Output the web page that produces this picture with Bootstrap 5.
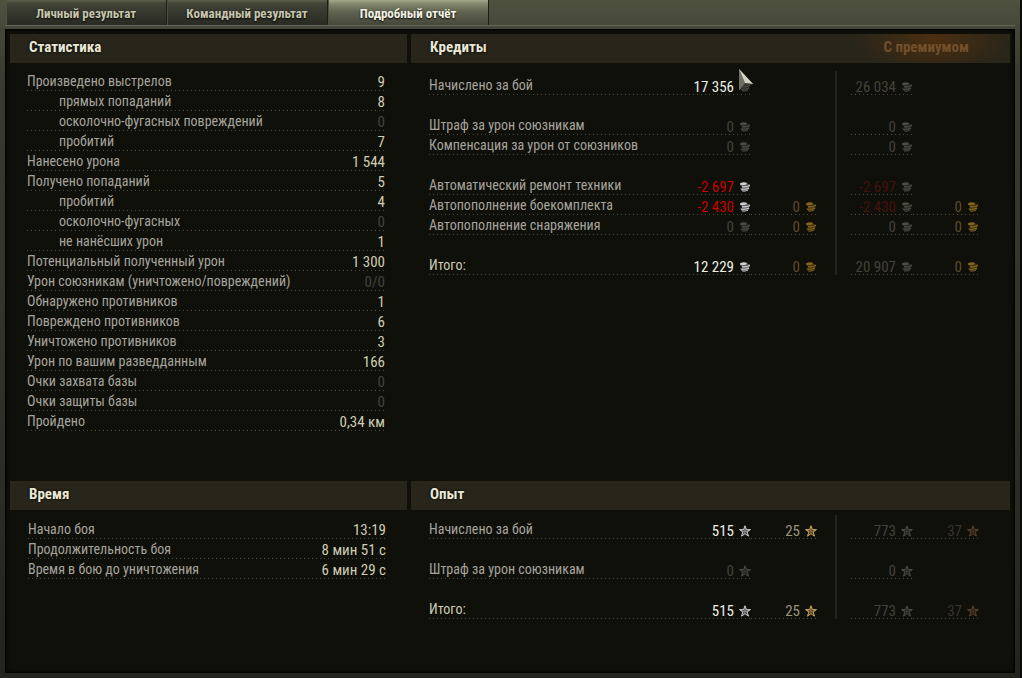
<!DOCTYPE html>
<html lang="ru" data-bs-theme="dark">
<head>
<meta charset="utf-8">
<meta name="viewport" content="width=device-width, initial-scale=1">
<title>Подробный отчёт</title>
<link rel="stylesheet" href="https://cdn.jsdelivr.net/npm/bootstrap@5.3.0/dist/css/bootstrap.min.css">
<script src="https://cdn.jsdelivr.net/npm/bootstrap@5.3.0/dist/js/bootstrap.bundle.min.js"></script>
<style>
  body { font-family: "Roboto Condensed", "Liberation Sans Narrow", "Liberation Sans", sans-serif; font-size: 14px; line-height: 20px; color: #a5a39b; background: #0b0b09; }
  .frame { min-height: 100vh; padding: 0 5px 5px; border-right: 2px solid #0b0b09;
    background: linear-gradient(#50523f 0, #45473a 28px, #3a3b30 80px, #33352a 300px, #23241d 100%); }
  .frame-bar { height: 26px; border-bottom: 1px solid #66675a; padding-left: 1px; gap: 1px; }
  .tab-btn { width: 160px; height: 25px; border: 0; padding: 3px 0 0; font-weight: 700; font-size: 13px; line-height: 20px; color: #c6c5ae;
    text-shadow: 0 1px 2px #000; background: linear-gradient(#5f614d 0, #45473a 3px, #3a3b31 9px, #292a22 100%); box-shadow: 1px 0 #1d1e18, inset 1px 0 #4d4f40; }
  .tab-btn.active { color: #f2f2e4; background: linear-gradient(#a3a78a 0, #82866c 4px, #636652 11px, #45473a 100%); }
  .panel { margin: 3px 0 0; padding: 4px; border: 1px solid #030302; background: #10100b; box-shadow: inset 0 0 4px #000; }
  .panes { display: grid; grid-template-columns: 397fr 599fr; column-gap: 4px; grid-template-rows: auto 1fr; row-gap: 50px; }
  .pane-head { height: 29px; padding: 0 41px 0 19px; background: #28251a; }
  .pane-head h2 { font-size: 15px; line-height: 27px; font-weight: 700; color: #e9e8d6; text-shadow: 0 0 3px #000; margin: 0; }
  .pane-head.premium { background: radial-gradient(ellipse 80px 34px at calc(100% - 76px) 6px, #4b2e10, #28251a00), #28251a; }
  .pane-head .premium-label { font-size: 15px; font-weight: 700; line-height: 27px; color: #73502a; }
  .stats { width: calc(100% - 39px); margin: 8px 22px 0 17px; }
  .time-list { width: calc(100% - 39px); margin: 9px 21px 0 18px; }
  table { border-collapse: separate; border-spacing: 0; }
  th { font-weight: 400; }
  td, th { height: 20px; padding: 0; white-space: nowrap; }
  .dots { background: repeating-linear-gradient(90deg, #4a4a40 0 1px, transparent 1px 4px) left bottom / 100% 1px no-repeat; }
  .stats tr { background: repeating-linear-gradient(90deg, #4a4a40 0 1px, transparent 1px 4px) left bottom / 100% 1px no-repeat; }
  .stats td { font-size: 15px; color: #cdccb4; text-align: right; padding-top: 2px; line-height: 18px; }
  .stats .sub { padding-left: 32px; }
  td.nil, .stats td.nil { color: #43423a; }
  .pay { width: calc(100% - 49px); margin: 8px 31px 0 18px; padding-top: 4px; table-layout: fixed;
    background: linear-gradient(#23221c, #23221c) calc(100% - 142px) 0 / 2px 100% no-repeat; }
  .pay td { font-size: 15px; padding-top: 5px; line-height: 15px; text-align: right; }
  .pay td.mid { padding: 0; }
  .pay svg { width: 12px; height: 12px; margin-left: 5px; vertical-align: -1px; }
  .xp { margin-top: 5px; }
  .total { color: #cdccb4; }
  .on { color: #eeeee4; } .neg { color: #c60000; } .dim { color: #43423a; } .negdim { color: #45100b; }
  .gold0 { color: #5d4b2b; } .free { color: #98957c; } .freedim { color: #37342a; }
  .i-on { color: #cfcfd2; } .i-dim { color: #4b4b48; } .i-gold { color: #86651c; } .i-free { color: #d0a65a; } .i-fdim { color: #594526; }
  .pointer { position: absolute; left: 739px; top: 69px; width: 15px; height: 23px; pointer-events: none; }
</style>
</head>
<body>
<svg class="d-none">
  <symbol id="coins" viewBox="0 0 12 12">
    <path d="M1 2.500Q4 .3 8 1.600L8.500 3 11 3.600V5.300L9.800 6 10.500 7.800 9 9.300Q6 11 2.500 9.800L1.500 8.300 3 7 2.500 5 1 4Z" fill="currentColor" opacity=".45"/>
    <path d="M1 2.400Q4.500.6 8 2.200L7 3.600Q3.500 4.600 1 3.600ZM3 5Q7 6 11 3.800V5Q7.500 7 3 6.200ZM1.500 7.300Q5 8.600 10 6.600V7.800Q6 9.500 2 8.500ZM3 9.400Q6 10.200 9 9V9.800Q6 11 3 10.300Z" fill="currentColor"/>
  </symbol>
  <symbol id="star" viewBox="0.500 0.500 11 11">
    <path d="M6 1.200L7.300 4.700H11L8 7 9.200 10.700 6 8.500 2.800 10.700 4 7 1 4.700H4.700Z" fill="currentColor" fill-opacity=".3" stroke="currentColor" stroke-width=".9"/>
    <path d="M6 2v5M6 7l4-2M6 7L2 5" stroke="currentColor" stroke-width=".5" fill="none"/>
  </symbol>
</svg>
<div class="frame d-flex flex-column">
  <div class="frame-bar d-flex" role="tablist">
    <button class="tab-btn" type="button" role="tab">Личный результат</button>
    <button class="tab-btn" type="button" role="tab">Командный результат</button>
    <button class="tab-btn active" type="button" role="tab" aria-selected="true">Подробный отчёт</button>
  </div>
  <main class="panel flex-grow-1 d-flex">
    <div class="panes flex-grow-1">
      <section>
        <header class="pane-head"><h2>Статистика</h2></header>
        <table class="stats">
          <tr><th>Произведено выстрелов</th><td>9</td></tr>
          <tr><th class="sub">прямых попаданий</th><td>8</td></tr>
          <tr><th class="sub">осколочно-фугасных повреждений</th><td class="nil">0</td></tr>
          <tr><th class="sub">пробитий</th><td>7</td></tr>
          <tr><th>Нанесено урона</th><td>1 544</td></tr>
          <tr><th>Получено попаданий</th><td>5</td></tr>
          <tr><th class="sub">пробитий</th><td>4</td></tr>
          <tr><th class="sub">осколочно-фугасных</th><td class="nil">0</td></tr>
          <tr><th class="sub">не нанёсших урон</th><td>1</td></tr>
          <tr><th>Потенциальный полученный урон</th><td>1 300</td></tr>
          <tr><th>Урон союзникам (уничтожено/повреждений)</th><td class="nil">0/0</td></tr>
          <tr><th>Обнаружено противников</th><td>1</td></tr>
          <tr><th>Повреждено противников</th><td>6</td></tr>
          <tr><th>Уничтожено противников</th><td>3</td></tr>
          <tr><th>Урон по вашим разведданным</th><td>166</td></tr>
          <tr><th>Очки захвата базы</th><td class="nil">0</td></tr>
          <tr><th>Очки защиты базы</th><td class="nil">0</td></tr>
          <tr><th>Пройдено</th><td>0,34 км</td></tr>
        </table>
      </section>
      <section>
        <header class="pane-head premium d-flex justify-content-between"><h2>Кредиты</h2><span class="premium-label">С премиумом</span></header>
        <table class="pay">
          <colgroup><col><col width="62"><col width="66"><col width="34"><col width="62"><col width="66"></colgroup>
          <tr><th class="dots">Начислено за бой</th><td class="dots on">17 356<svg class="i-dim"><use href="#coins"/></svg></td><td></td><td class="mid"></td><td class="dots dim">26 034<svg class="i-dim"><use href="#coins"/></svg></td><td></td></tr>
          <tr><td colspan="6"></td></tr>
          <tr><th class="dots">Штраф за урон союзникам</th><td class="dots dim">0<svg class="i-dim"><use href="#coins"/></svg></td><td></td><td class="mid"></td><td class="dots dim">0<svg class="i-dim"><use href="#coins"/></svg></td><td></td></tr>
          <tr><th class="dots">Компенсация за урон от союзников</th><td class="dots dim">0<svg class="i-dim"><use href="#coins"/></svg></td><td></td><td class="mid"></td><td class="dots dim">0<svg class="i-dim"><use href="#coins"/></svg></td><td></td></tr>
          <tr><td colspan="6"></td></tr>
          <tr><th class="dots">Автоматический ремонт техники</th><td class="dots neg">-2 697<svg class="i-on"><use href="#coins"/></svg></td><td></td><td class="mid"></td><td class="dots negdim">-2 697<svg class="i-dim"><use href="#coins"/></svg></td><td></td></tr>
          <tr><th class="dots">Автопополнение боекомплекта</th><td class="dots neg">-2 430<svg class="i-on"><use href="#coins"/></svg></td><td class="dots gold0">0<svg class="i-gold"><use href="#coins"/></svg></td><td class="mid"></td><td class="dots negdim">-2 430<svg class="i-dim"><use href="#coins"/></svg></td><td class="dots gold0">0<svg class="i-gold"><use href="#coins"/></svg></td></tr>
          <tr><th class="dots">Автопополнение снаряжения</th><td class="dots dim">0<svg class="i-dim"><use href="#coins"/></svg></td><td class="dots gold0">0<svg class="i-gold"><use href="#coins"/></svg></td><td class="mid"></td><td class="dots dim">0<svg class="i-dim"><use href="#coins"/></svg></td><td class="dots gold0">0<svg class="i-gold"><use href="#coins"/></svg></td></tr>
          <tr><td colspan="6"></td></tr>
          <tr><th class="dots total">Итого:</th><td class="dots on">12 229<svg class="i-on"><use href="#coins"/></svg></td><td class="dots gold0">0<svg class="i-gold"><use href="#coins"/></svg></td><td class="mid"></td><td class="dots dim">20 907<svg class="i-dim"><use href="#coins"/></svg></td><td class="dots gold0">0<svg class="i-gold"><use href="#coins"/></svg></td></tr>
        </table>
      </section>
      <section>
        <header class="pane-head"><h2>Время</h2></header>
        <table class="stats time-list">
          <tr><th>Начало боя</th><td>13:19</td></tr>
          <tr><th>Продолжительность боя</th><td>8 мин 51 с</td></tr>
          <tr><th>Время в бою до уничтожения</th><td>6 мин 29 с</td></tr>
        </table>
      </section>
      <section>
        <header class="pane-head"><h2>Опыт</h2></header>
        <table class="pay xp">
          <colgroup><col><col width="62"><col width="66"><col width="34"><col width="62"><col width="66"></colgroup>
          <tr><th class="dots">Начислено за бой</th><td class="dots on">515<svg class="i-on"><use href="#star"/></svg></td><td class="dots free">25<svg class="i-free"><use href="#star"/></svg></td><td class="mid"></td><td class="dots dim">773<svg class="i-dim"><use href="#star"/></svg></td><td class="dots freedim">37<svg class="i-fdim"><use href="#star"/></svg></td></tr>
          <tr><td colspan="6"></td></tr>
          <tr><th class="dots">Штраф за урон союзникам</th><td class="dots dim">0<svg class="i-dim"><use href="#star"/></svg></td><td></td><td class="mid"></td><td class="dots dim">0<svg class="i-dim"><use href="#star"/></svg></td><td></td></tr>
          <tr><td colspan="6"></td></tr>
          <tr><th class="dots total">Итого:</th><td class="dots on">515<svg class="i-on"><use href="#star"/></svg></td><td class="dots free">25<svg class="i-free"><use href="#star"/></svg></td><td class="mid"></td><td class="dots dim">773<svg class="i-dim"><use href="#star"/></svg></td><td class="dots freedim">37<svg class="i-fdim"><use href="#star"/></svg></td></tr>
        </table>
      </section>
    </div>
  </main>
</div>
<svg class="pointer" viewBox="0 0 15 23">
  <path d="M0 0L14 15L6 16L0 21Z" fill="#8d8a7e"/>
  <path d="M0 0L14 15L6 14Z" fill="#d5d2c6"/>
  <path d="M0 0L6 14L0 21Z" fill="#706d62"/>
  <path d="M6 14L14 15L6 17L1 20Z" fill="#3b3932"/>
</svg>
</body>
</html>
